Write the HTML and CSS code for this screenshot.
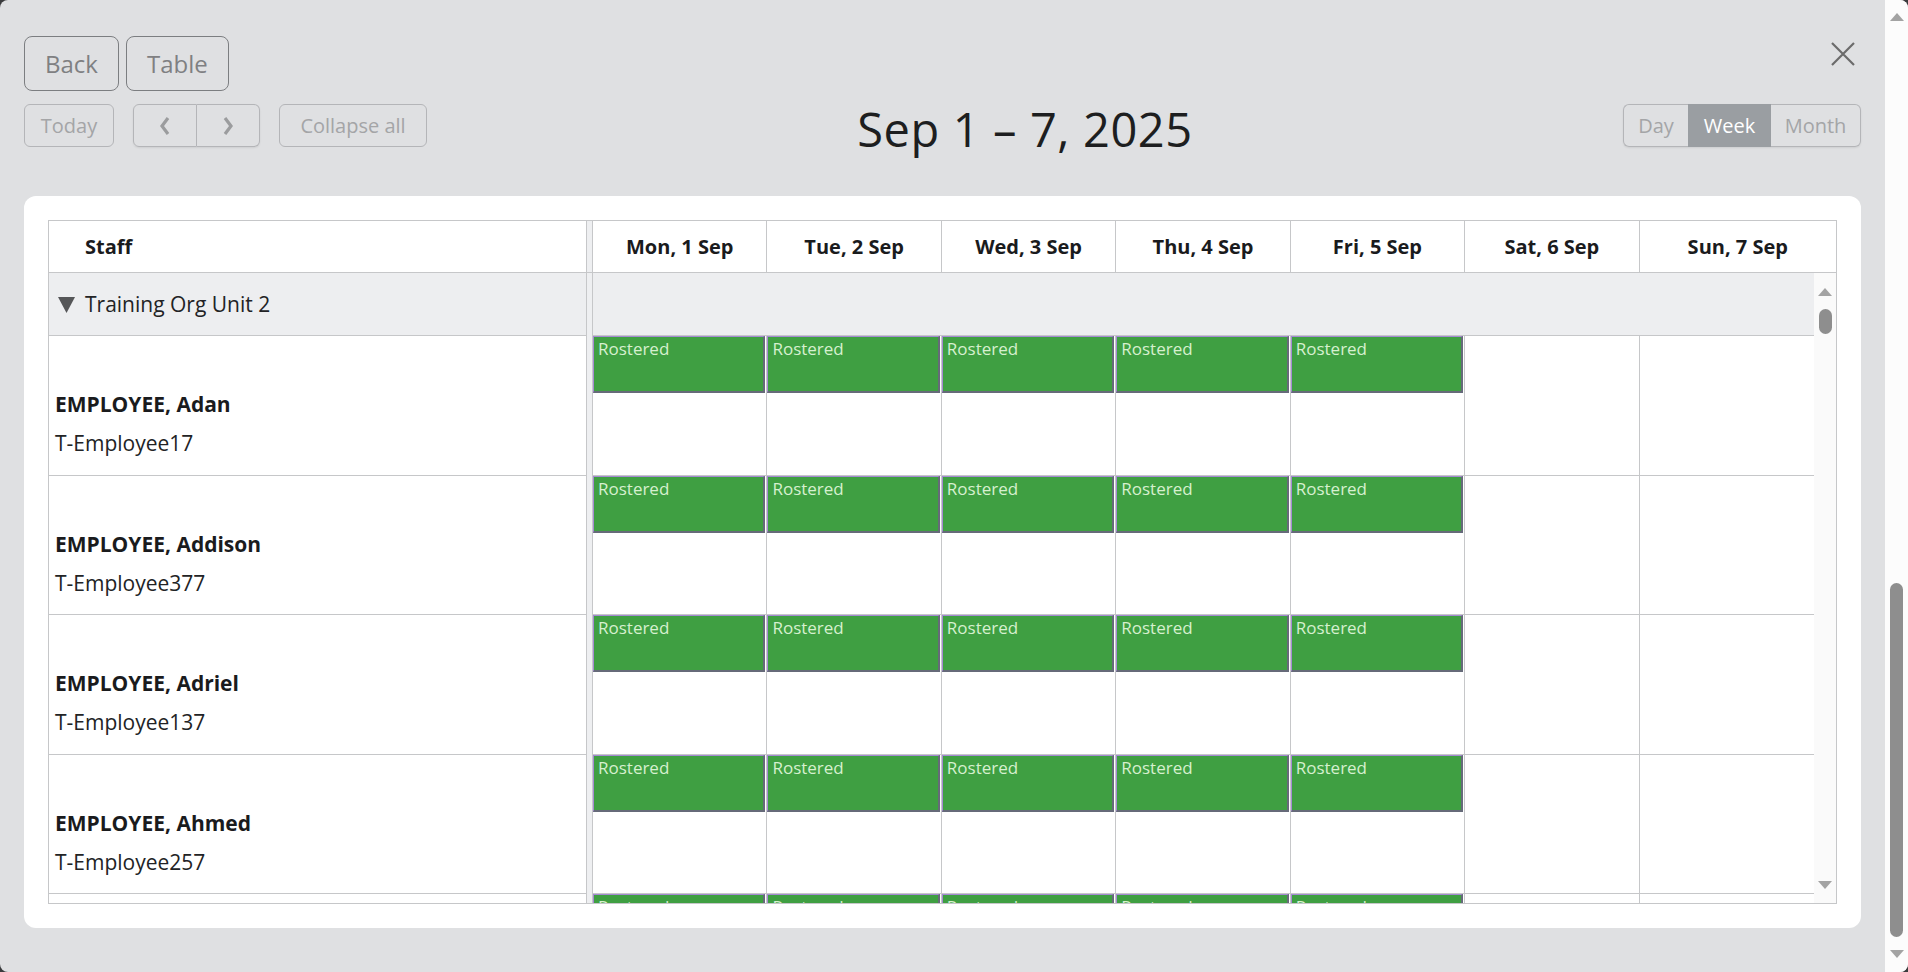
FILE: index.html
```html
<!DOCTYPE html>
<html lang="en">
<head>
<meta charset="utf-8">
<title>Roster – Week</title>
<link rel="stylesheet" href="styles.css">
</head>
<body>
<div class="dialog">
  <div class="dialog-main">
    <div class="top-row">
      <div class="top-actions">
        <button class="btn-lg">Back</button>
        <button class="btn-lg">Table</button>
      </div>
      <button class="close" aria-label="Close">
        <svg width="24" height="24" viewBox="0 0 24 24"><path d="M1 1 L23 23 M23 1 L1 23" stroke="#6b6b6b" stroke-width="2.2" fill="none"/></svg>
      </button>
    </div>

    <div class="toolbar">
      <div class="tb-left">
        <button class="btn btn-today">Today</button>
        <div class="nav">
          <button class="btn nav-btn nav-prev" aria-label="Previous"><svg width="12" height="20" viewBox="0 0 12 20"><polyline points="9,2 3,10 9,18" fill="none" stroke="#9b9c9e" stroke-width="3.2"/></svg></button>
          <button class="btn nav-btn nav-next" aria-label="Next"><svg width="12" height="20" viewBox="0 0 12 20"><polyline points="3,2 9,10 3,18" fill="none" stroke="#9b9c9e" stroke-width="3.2"/></svg></button>
        </div>
        <button class="btn btn-collapse">Collapse all</button>
      </div>
      <h2 class="title">Sep 1 – 7, 2025</h2>
      <div class="seg">
        <button class="btn seg-day">Day</button>
        <button class="btn seg-week active">Week</button>
        <button class="btn seg-month">Month</button>
      </div>
    </div>

    <div class="card">
      <div class="tl">
        <div class="tl-head">
          <div class="staff-h">Staff</div>
          <div class="divider"></div>
          <div class="days-h">
            <div class="day-h">Mon, 1 Sep</div>
            <div class="day-h">Tue, 2 Sep</div>
            <div class="day-h">Wed, 3 Sep</div>
            <div class="day-h">Thu, 4 Sep</div>
            <div class="day-h">Fri, 5 Sep</div>
            <div class="day-h">Sat, 6 Sep</div>
            <div class="day-h last">Sun, 7 Sep</div>
          </div>
        </div>
        <div class="tl-body">
          <div class="staff-col">
            <div class="group-cell">
              <svg class="caret" width="17" height="16" viewBox="0 0 17 16"><polygon points="0,0 17,0 8.5,16" fill="#555658"/></svg>
              <span>Training Org Unit 2</span>
            </div>
            <div class="staff-cell"><div class="name">EMPLOYEE, Adan</div><div class="sid">T-Employee17</div></div>
            <div class="staff-cell"><div class="name">EMPLOYEE, Addison</div><div class="sid">T-Employee377</div></div>
            <div class="staff-cell"><div class="name">EMPLOYEE, Adriel</div><div class="sid">T-Employee137</div></div>
            <div class="staff-cell"><div class="name">EMPLOYEE, Ahmed</div><div class="sid">T-Employee257</div></div>
            <div class="staff-cell"></div>
          </div>
          <div class="divider"></div>
          <div class="lanes">
            <div class="rows">
              <div class="group-lane"></div>
              <div class="lane">
                <div class="slot"><div class="ev">Rostered</div></div>
                <div class="slot"><div class="ev">Rostered</div></div>
                <div class="slot"><div class="ev">Rostered</div></div>
                <div class="slot"><div class="ev">Rostered</div></div>
                <div class="slot"><div class="ev">Rostered</div></div>
                <div class="slot"></div>
                <div class="slot"></div>
              </div>
              <div class="lane">
                <div class="slot"><div class="ev">Rostered</div></div>
                <div class="slot"><div class="ev">Rostered</div></div>
                <div class="slot"><div class="ev">Rostered</div></div>
                <div class="slot"><div class="ev">Rostered</div></div>
                <div class="slot"><div class="ev">Rostered</div></div>
                <div class="slot"></div>
                <div class="slot"></div>
              </div>
              <div class="lane">
                <div class="slot"><div class="ev">Rostered</div></div>
                <div class="slot"><div class="ev">Rostered</div></div>
                <div class="slot"><div class="ev">Rostered</div></div>
                <div class="slot"><div class="ev">Rostered</div></div>
                <div class="slot"><div class="ev">Rostered</div></div>
                <div class="slot"></div>
                <div class="slot"></div>
              </div>
              <div class="lane">
                <div class="slot"><div class="ev">Rostered</div></div>
                <div class="slot"><div class="ev">Rostered</div></div>
                <div class="slot"><div class="ev">Rostered</div></div>
                <div class="slot"><div class="ev">Rostered</div></div>
                <div class="slot"><div class="ev">Rostered</div></div>
                <div class="slot"></div>
                <div class="slot"></div>
              </div>
              <div class="lane">
                <div class="slot"><div class="ev">Rostered</div></div>
                <div class="slot"><div class="ev">Rostered</div></div>
                <div class="slot"><div class="ev">Rostered</div></div>
                <div class="slot"><div class="ev">Rostered</div></div>
                <div class="slot"><div class="ev">Rostered</div></div>
                <div class="slot"></div>
                <div class="slot"></div>
              </div>
            </div>
            <div class="vscroll inner">
              <div class="arrow-up"></div>
              <div class="thumb inner-thumb"></div>
              <div class="spacer"></div>
              <div class="arrow-down"></div>
            </div>
          </div>
        </div>
      </div>
    </div>
  </div>
  <div class="vscroll page">
    <div class="arrow-up"></div>
    <div class="spacer"></div>
    <div class="thumb page-thumb"></div>
    <div class="arrow-down"></div>
  </div>
</div>
</body>
</html>
```
FILE: styles.css
```css
* { box-sizing: border-box; }
html, body { margin: 0; padding: 0; }
body {
  background: #3a3b3d;
  font-family: "Open Sans", "DejaVu Sans", sans-serif;
  overflow: hidden;
  width: 1908px;
  height: 972px;
}
button { font-family: inherit; cursor: pointer; }

.dialog {
  display: flex;
  width: 1908px;
  height: 972px;
  background: #dfe0e2;
  border-radius: 8px;
  overflow: hidden;
}
.dialog-main {
  flex: 1;
  min-width: 0;
  display: flex;
  flex-direction: column;
  padding: 36px 24px 44px 24px;
}

/* top row */
.top-row {
  display: flex;
  justify-content: space-between;
  align-items: flex-start;
  height: 55px;
  flex: none;
}
.top-actions { display: flex; gap: 7px; }
.btn-lg {
  height: 55px;
  padding: 0 20px;
  font-size: 24px;
  line-height: 1;
  color: #7f8082;
  background: transparent;
  border: 1px solid #7c7e81;
  border-radius: 8px;
}
.close {
  margin: 6px 6px 0 0;
  padding: 0;
  width: 24px;
  height: 24px;
  border: 0;
  background: transparent;
  display: flex;
}

/* toolbar */
.toolbar {
  margin-top: 13px;
  height: 43px;
  flex: none;
  display: flex;
  justify-content: space-between;
  align-items: flex-start;
}
.tb-left { display: flex; gap: 19px; }
.btn {
  height: 43px;
  padding: 0;
  font-size: 20px;
  line-height: 1;
  color: #a4a5a7;
  background: transparent;
  border: 1px solid #b4b5b8;
  border-radius: 6px;
  display: flex;
  align-items: center;
  justify-content: center;
}
.btn-today { width: 90px; }
.btn-collapse { width: 148px; }
.nav { display: flex; box-shadow: 0 1px 2px rgba(0,0,0,0.08); border-radius: 6px; }
.nav-btn { width: 63px; }
.nav-prev { border-radius: 6px 0 0 6px; width: 64px; }
.nav-next { border-radius: 0 6px 6px 0; border-left: 0; }

.title {
  margin: 2px 0 0 0;
  font-size: 47px;
  line-height: 46px;
  font-weight: 400;
  letter-spacing: 0.6px;
  color: #1d1e20;
  white-space: nowrap;
}

.seg { display: flex; box-shadow: 0 1px 2px rgba(0,0,0,0.08); border-radius: 6px; }
.seg .btn { border-radius: 0; }
.seg-day { width: 65px; border-radius: 6px 0 0 6px !important; border-right: 0; }
.seg-week { width: 83px; }
.seg-month { width: 90px; border-radius: 0 6px 6px 0 !important; border-left: 0; }
.seg .active {
  background: #9a9ea2;
  border-color: #9a9ea2;
  color: #ffffff;
}

/* card */
.card {
  margin-top: 49px;
  flex: 1;
  min-height: 0;
  background: #ffffff;
  border-radius: 12px;
  padding: 24px;
  display: flex;
}
.tl {
  flex: 1;
  min-width: 0;
  display: flex;
  flex-direction: column;
  border: 1px solid #c6c7c9;
}
.tl-head {
  height: 52px;
  flex: none;
  display: flex;
  border-bottom: 1px solid #c6c7c9;
}
.staff-h {
  width: 537px;
  flex: none;
  display: flex;
  align-items: center;
  padding-left: 36px;
  font-size: 20px;
  font-weight: 700;
  color: #1a1b1d;
}
.divider {
  width: 7px;
  flex: none;
  border-left: 1px solid #c6c7c9;
  border-right: 1px solid #c6c7c9;
  background: #eeeff1;
}
.days-h {
  flex: 1;
  display: grid;
  grid-template-columns: repeat(7, 1fr) 22px;
}
.day-h {
  display: flex;
  align-items: center;
  justify-content: center;
  border-right: 1px solid #c6c7c9;
  font-size: 20px;
  font-weight: 700;
  color: #1a1b1d;
  white-space: nowrap;
}
.day-h.last { grid-column: span 2; border-right: 0; }

.tl-body {
  flex: 1;
  min-height: 0;
  display: flex;
  overflow: hidden;
}
.staff-col { width: 537px; flex: none; }
.group-cell {
  height: 63px;
  background: #edeef0;
  border-bottom: 1px solid #c6c7c9;
  display: flex;
  align-items: center;
  gap: 10px;
  padding-left: 9px;
  font-size: 21px;
  color: #222325;
}
.caret { flex: none; margin-top: 1px; }
.staff-cell {
  height: 139.5px;
  border-bottom: 1px solid #c6c7c9;
  padding: 53px 0 0 6px;
}
.name {
  font-size: 21px;
  line-height: 30px;
  font-weight: 700;
  color: #1a1b1d;
}
.sid {
  margin-top: 9px;
  font-size: 21px;
  line-height: 30px;
  color: #222325;
}

.lanes { flex: 1; min-width: 0; display: flex; }
.rows { flex: 1; min-width: 0; }
.group-lane {
  height: 63px;
  background: #edeef0;
  border-bottom: 1px solid #c6c7c9;
}
.lane {
  height: 139.5px;
  display: grid;
  grid-template-columns: repeat(7, 1fr);
  border-bottom: 1px solid #c6c7c9;
}
.slot { border-right: 1px solid #c6c7c9; min-width: 0; }
.slot:last-child { border-right: 0; }
.ev {
  height: 57px;
  margin-right: 1px;
  background: #3f9f42;
  border-style: solid;
  border-width: 1px 2px 2px 1px;
  border-color: #a48ad2 #666a79 #666a79 #a48ad2;
  padding: 2px 4px;
  font-size: 17px;
  line-height: 20px;
  color: #d6f0cf;
  overflow: hidden;
  white-space: nowrap;
}

/* scrollbars */
.vscroll {
  flex: none;
  background: #fafafa;
  display: flex;
  flex-direction: column;
  align-items: center;
}
.vscroll.inner { width: 22px; padding: 15px 0 14px; }
.vscroll.page { width: 23px; padding: 13px 0 14px; background: #fcfcfc; }
.spacer { flex: 1; }
.arrow-up {
  width: 0; height: 0;
  border-left: 7.5px solid transparent;
  border-right: 7.5px solid transparent;
  border-bottom: 8px solid #a3a3a3;
}
.arrow-down {
  width: 0; height: 0;
  border-left: 7.5px solid transparent;
  border-right: 7.5px solid transparent;
  border-top: 8px solid #a3a3a3;
}
.thumb {
  width: 13px;
  background: #8e8e8e;
  border-radius: 6.5px;
}
.inner-thumb { height: 25px; margin-top: 13px; }
.page-thumb { height: 354px; margin-bottom: 13px; }
```
